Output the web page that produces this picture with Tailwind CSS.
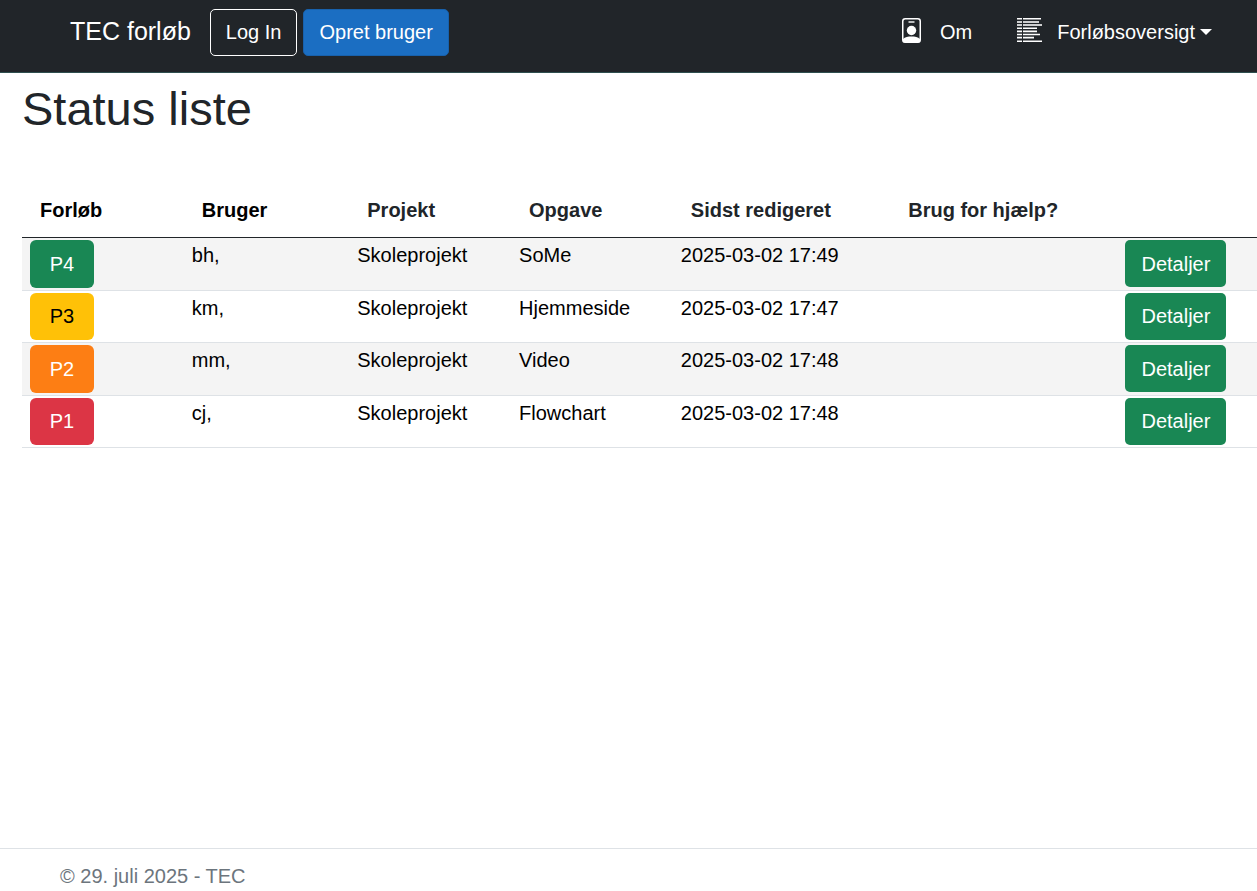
<!DOCTYPE html>
<html lang="da">
<head>
<meta charset="utf-8">
<meta name="viewport" content="width=device-width, initial-scale=1">
<title>Status liste - TEC forløb</title>
<script src="https://cdn.jsdelivr.net/npm/@tailwindcss/browser@4"></script>
</head>
<body class="flex min-h-screen flex-col overflow-x-hidden bg-white font-['Liberation_Sans',Arial,sans-serif] text-[20px] leading-[30px] text-[#212529]">
<header class="border-b border-[#2f4f4f] bg-[#212529] text-white">
  <nav class="flex h-[72px] items-start pr-[45px] pl-[70px] pt-[9px]">
    <a href="#" class="mr-[19px] pt-1 text-[25px] leading-9">TEC forløb</a>
    <button type="button" class="mr-1.5 h-[47px] rounded-[5px] border border-white px-[15px] pb-0.5">Log In</button>
    <button type="button" class="h-[47px] rounded-[5px] border border-[#1861ac] bg-[#1b6ec2] px-[15px] pb-0.5">Opret bruger</button>
    <ul class="ml-auto flex items-start pt-2">
      <li><a href="#" class="flex items-start">
        <svg class="mt-px mr-[19px] h-[25px] w-[19px]" viewBox="0 0 19 25" fill="none" aria-hidden="true"><rect x=".75" y=".75" width="17.5" height="23.5" rx="2.5" stroke="#fff" stroke-width="1.5"/><path d="M6.500 4h6" stroke="#fff" stroke-opacity=".7" stroke-width="2"/><circle cx="9.5" cy="12.5" r="4.7" fill="#fff"/><path d="M1 21c2-2 5-2.500 8.500-2.500S16 19 18 21v2.200q0 1.300-1.500 1.300h-14Q1 24.500 1 23.200z" fill="#fff"/></svg>
        Om</a></li>
      <li class="ml-[45px]"><button type="button" class="flex items-start">
        <svg class="mt-px mr-[15px] h-[25px] w-[25px]" viewBox="0 0 25 25" fill="none" stroke="#fff" stroke-width="1.6" aria-hidden="true"><path d="M0 .8h5M0 10.300h5M0 13.400h5M0 16.500h5M0 19.600h5M0 23.200h5M6 .8h18M6 10.300h14M6 13.400h14M6 16.500h17M6 19.600h11M6 23.200h19"/><path stroke-opacity=".78" stroke-width="2" d="M0 4h5M0 7h5M6 4h16M6 7h19"/></svg>
        Forløbsoversigt
        <svg class="mt-3 ml-[5px] h-1.5 w-3" viewBox="0 0 12 6" fill="#fff" aria-hidden="true"><path d="M0 0h12L6 6z"/></svg>
      </button></li>
    </ul>
  </nav>
</header>
<main class="flex-1 pl-[22px]">
  <h1 class="pt-2 text-[47px] leading-[56px]">Status liste</h1>
  <table class="mt-[46px] w-full table-fixed border-separate border-spacing-0 text-left text-black">
    <thead>
      <tr class="h-[55px] *:border-b *:border-[#212529] *:px-[18px] *:font-bold">
        <th scope="col" class="w-[13.1%]"><button type="button">Forløb</button></th>
        <th scope="col" class="w-[13.4%]"><button type="button">Bruger</button></th>
        <th scope="col" class="w-[13.1%] text-[#212529]">Projekt</th>
        <th scope="col" class="w-[13.1%] text-[#212529]">Opgave</th>
        <th scope="col" class="w-[17.6%] text-[#212529]">Sidst redigeret</th>
        <th scope="col" class="w-[18.4%] text-[#212529]">Brug for hjælp?</th>
        <td></td>
      </tr>
    </thead>
    <tbody class="*:*:border-b *:*:border-[#dee2e6] *:*:px-2 *:*:py-0.5 *:*:align-top *:odd:bg-[#f4f4f4]">
      <tr><td><button type="button" class="block h-12 w-16 rounded-md bg-[#198754] text-white">P4</button></td><td>bh,</td><td>Skoleprojekt</td><td>SoMe</td><td>2025-03-02 17:49</td><td></td><td><button type="button" class="block h-[47px] w-[101px] rounded-[5px] bg-[#198754] text-white">Detaljer</button></td></tr>
      <tr><td><button type="button" class="block h-[47px] w-16 rounded-md bg-[#ffc107] pb-px text-black">P3</button></td><td>km,</td><td>Skoleprojekt</td><td>Hjemmeside</td><td>2025-03-02 17:47</td><td></td><td><button type="button" class="block h-[47px] w-[101px] rounded-[5px] bg-[#198754] pb-px text-white">Detaljer</button></td></tr>
      <tr><td><button type="button" class="block h-12 w-16 rounded-md bg-[#fd7e14] text-white">P2</button></td><td>mm,</td><td>Skoleprojekt</td><td>Video</td><td>2025-03-02 17:48</td><td></td><td><button type="button" class="block h-[47px] w-[101px] rounded-[5px] bg-[#198754] text-white">Detaljer</button></td></tr>
      <tr><td><button type="button" class="block h-[47px] w-16 rounded-md bg-[#dc3545] pb-px text-white">P1</button></td><td>cj,</td><td>Skoleprojekt</td><td>Flowchart</td><td>2025-03-02 17:48</td><td></td><td><button type="button" class="block h-[47px] w-[101px] rounded-[5px] bg-[#198754] pb-px text-white">Detaljer</button></td></tr>
    </tbody>
  </table>
</main>
<footer class="border-t border-[#dee2e6] pt-3 pl-[60px] text-[#6c757d]">© 29. juli 2025 - TEC</footer>
</body>
</html>
